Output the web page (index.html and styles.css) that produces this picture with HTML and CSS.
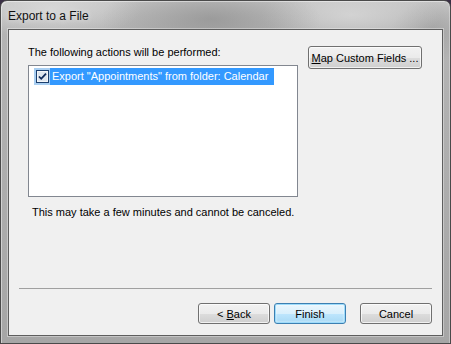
FILE: index.html
```html
<!DOCTYPE html>
<html lang="en">
<head>
  <meta charset="UTF-8">
  <title>Export to a File</title>
  <link rel="stylesheet" href="styles.css">
</head>
<body>
<div class="window">
  <div class="titlebar">Export to a File</div>

  <div class="client">
    <div class="main">
      <div class="left">
        <p class="label">The following actions will be performed:</p>
        <div class="listbox">
          <div class="item">
            <span class="check">
              <svg width="13" height="13" viewBox="0 0 13 13">
                <rect x="0.5" y="0.5" width="12" height="12" fill="#f4f6f8" stroke="#1c3f6e"/>
                <rect x="2" y="2" width="9" height="9" fill="#dfe6ee"/>
                <path d="M3 6.5 L5.2 8.8 L10 3.6" fill="none" stroke="#0f2a5a" stroke-width="1.8"/>
              </svg>
            </span>
            <span class="item-text">Export "Appointments" from folder: Calendar</span>
          </div>
        </div>
        <p class="note">This may take a few minutes and cannot be canceled.</p>
      </div>
      <button class="btn btn-map"><u>M</u>ap Custom Fields ...</button>
    </div>

    <div class="separator"></div>

    <div class="footer">
      <button class="btn">&lt; <u>B</u>ack</button>
      <button class="btn btn-default">Finish</button>
      <button class="btn btn-cancel">Cancel</button>
    </div>
  </div>
</div>
</body>
</html>
```

FILE: styles.css
```css
* { margin: 0; padding: 0; box-sizing: border-box; }

body {
  background: #3a2f45;
  font-family: 'Liberation Sans', Arial, sans-serif;
  font-size: 11px;
  color: #000;
  white-space: nowrap;
}

/* window frame */
.window {
  width: 451px;
  height: 344px;
  padding: 0 7px 7px 7px;
  border: 1px solid #4a4a4a;
  border-radius: 7px 7px 0 0;
  background:
    radial-gradient(ellipse 110px 40px at 210px 18px, rgba(130,130,130,0.55), rgba(130,130,130,0)),
    radial-gradient(ellipse 90px 30px at 50px 8px, rgba(230,230,230,0.6), rgba(230,230,230,0)),
    radial-gradient(ellipse 90px 30px at 350px 14px, rgba(220,220,220,0.7), rgba(220,220,220,0)),
    radial-gradient(ellipse 40px 30px at 430px 30px, rgba(150,150,150,0.5), rgba(150,150,150,0)),
    linear-gradient(to bottom, #c4c4c4 0px, #b4b4b4 30px, #a6a6a6 100%);
  box-shadow: inset 1px 1px 0 rgba(255,255,255,0.45), inset -1px 0 0 rgba(255,255,255,0.3);
  display: flex;
  flex-direction: column;
}

.titlebar {
  height: 28px;
  padding: 8px 0 0 0;
  font-size: 12px;
  color: #111;
  text-shadow: 0 0 6px rgba(255,255,255,0.7);
}

.client {
  flex: 1;
  border: 1px solid #5e5e5e;
  background: #f0f0f0;
  box-shadow: 0 0 0 1px rgba(255,255,255,0.35);
  display: flex;
  flex-direction: column;
}

.main {
  display: flex;
  align-items: flex-start;
  padding: 15px 0 0 19px;
  height: 258px;
}

.left {
  width: 270px;
}

.label {
  line-height: 14px;
  height: 20px;
}

.listbox {
  height: 132px;
  border: 1px solid #828790;
  background: #fff;
  padding: 1px 0 0 5px;
}

.item {
  display: flex;
  height: 17px;
  margin-top: 1px;
}

.check {
  width: 16px;
  height: 17px;
  background: #a9cff2;
  display: flex;
  align-items: center;
  justify-content: center;
}

.item-text {
  background: #3399ff;
  color: #fff;
  line-height: 17px;
  padding: 0 4px 0 2px;
  width: 224px;
}

.note {
  margin: 8px 0 0 4px;
  line-height: 14px;
}

.separator {
  height: 1px;
  margin: 0 10px 0 10px;
  border-top: 1px solid #a0a0a0;
  background: #fff;
}

.footer {
  display: flex;
  justify-content: flex-end;
  padding: 14px 10px 0 0;
  gap: 4px;
}

/* buttons */
.btn {
  font-family: 'Liberation Sans', Arial, sans-serif;
  font-size: 11px;
  color: #000;
  width: 72px;
  height: 21px;
  border: 1px solid #707070;
  border-radius: 3px;
  background: linear-gradient(to bottom, #f2f2f2 0%, #ebebeb 50%, #dddddd 51%, #cfcfcf 100%);
  box-shadow: inset 0 0 0 1px rgba(255,255,255,0.7);
  white-space: nowrap;
}

.btn u { text-decoration: underline; }

.btn-map {
  width: 114px;
  height: 23px;
  margin: 1px 0 0 10px;
}

.btn-default {
  border-color: #3c7fb1;
  background: linear-gradient(to bottom, #eaf6fd 0%, #d9f0fc 50%, #bee6fd 51%, #a7d9f5 100%);
  box-shadow: inset 0 0 0 1px #9edcfb, inset 0 0 2px 1px rgba(255,255,255,0.8);
}

.btn-cancel {
  margin-left: 10px;
}
```
